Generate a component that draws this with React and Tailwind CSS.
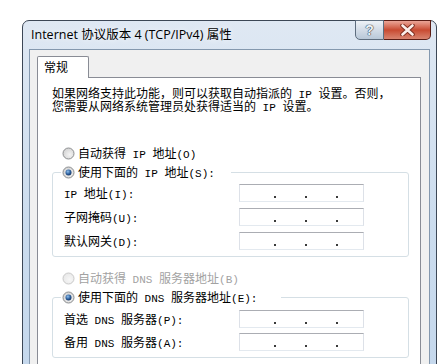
import React from 'react'

const L = ({ children }) => (
  <span className="font-['Liberation_Mono'] text-[11px] leading-[0px]">{children}</span>
)

const Radio = ({ checked, disabled }) => (
  <svg width="13" height="13" viewBox="0 0 13 13" className="shrink-0">
    <defs>
      <radialGradient id={disabled ? 'rgd' : 'rgn'} cx="0.6" cy="0.6" r="0.7">
        <stop offset="0" stopColor={disabled ? '#f7f7f7' : '#f4f4f4'} />
        <stop offset="1" stopColor={disabled ? '#e6e6e6' : '#cfcfcf'} />
      </radialGradient>
      <radialGradient id="rgdot" cx="0.4" cy="0.35" r="0.7">
        <stop offset="0" stopColor="#8fc0ee" />
        <stop offset="0.6" stopColor="#2a5c9a" />
        <stop offset="1" stopColor="#14305a" />
      </radialGradient>
    </defs>
    <circle
      cx="6.5"
      cy="6.5"
      r="5.5"
      fill={`url(#${disabled ? 'rgd' : 'rgn'})`}
      stroke={disabled ? '#c9c9c9' : '#8c8e90'}
    />
    {checked && <circle cx="6.5" cy="6.5" r="3" fill="url(#rgdot)" />}
  </svg>
)

const IpBox = () => (
  <div className="w-[125px] h-[18px] bg-white border border-[#dde1e8] border-t-[#abadb3] border-b-[#e3e9ef] flex items-start pt-[11px] pl-[34px] gap-[29px]">
    <span className="w-[2px] h-[2px] bg-[#3a3a3a]" />
    <span className="w-[2px] h-[2px] bg-[#3a3a3a]" />
    <span className="w-[2px] h-[2px] bg-[#3a3a3a]" />
  </div>
)

const Row = ({ label, className = '' }) => (
  <div className={`flex items-center h-[18px] pl-[11px] ${className}`}>
    <div className="w-[175px] leading-[12px]">{label}</div>
    <IpBox />
  </div>
)

export default function App() {
  return (
    <div className="w-[446px] h-[364px] bg-white overflow-hidden pt-[20px] pl-[22px]">
      <div className="w-[415px] h-[420px] border border-[#3c4756] rounded-t-[7px] bg-gradient-to-b from-[#dfe8f3] via-[#cbdcee] to-[#c2d6ec] flex flex-col">
        {/* title bar */}
        <div className="h-[28px] shrink-0 flex items-start justify-between pl-[8px] pr-[5px]">
          <div className="self-center font-['Open_Sans','Noto_Sans_CJK_SC',sans-serif] text-[12.5px] leading-[14px] text-black [text-shadow:0_0_6px_#ffffff]">
            Internet 协议版本 4 (TCP/IPv4) 属性
          </div>
          <div className="flex -mt-px">
            <div className="w-[29px] h-[20px] rounded-bl-[5px] border border-[#5e6d7e] bg-gradient-to-b from-[#eef2f7] via-[#d3dce7] to-[#b9c8d8] flex items-center justify-center font-['Liberation_Sans'] font-bold text-[14px] leading-none text-[#eef2f6] [text-shadow:0_0_1px_#34404f,0_0_1px_#34404f,0_0_1px_#34404f]">
              ?
            </div>
            <div className="w-[47px] h-[20px] rounded-br-[5px] border border-l-0 border-[#5a1c14] bg-gradient-to-b from-[#eaa597] via-[#c84a31] to-[#d88470] flex items-center justify-center">
              <svg width="15" height="12" viewBox="0 0 15 12">
                <path d="M2.5 1.5 L12.5 10.5 M12.5 1.5 L2.5 10.5" stroke="#7a2a1c" strokeWidth="4.4" strokeLinecap="round" />
                <path d="M2.5 1.5 L12.5 10.5 M12.5 1.5 L2.5 10.5" stroke="#fbeeea" strokeWidth="2.6" strokeLinecap="round" />
              </svg>
            </div>
          </div>
        </div>

        {/* client area */}
        <div className="mx-[6px] flex-1 border border-[#8498ae] bg-[#f0f0f0] pl-[7px] pr-[8px] pt-[6px] flex flex-col font-['Noto_Sans_CJK_SC',sans-serif] text-[12px] text-black">
          <div className="flex">
            <div className="relative z-10 w-[52px] h-[22px] -mb-px border border-b-0 border-[#898c95] rounded-t-[2px] bg-white pl-[6px] pt-[3px] leading-[14px]">
              常规
            </div>
          </div>
          <div className="flex-1 border border-[#898c95] bg-white pl-[14px] pt-[8px]">
            <p className="leading-[13px]">
              如果网络支持此功能，则可以获取自动指派的<L> IP </L>设置。否则，
            </p>
            <p className="leading-[13px]">
              您需要从网络系统管理员处获得适当的<L> IP </L>设置。
            </p>

            <div className="mt-[33px] h-[16px] pl-[10px] flex items-center gap-[3px] leading-[12px]">
              <Radio />
              <span>
                自动获得<L> IP </L>地址<L>(O)</L>
              </span>
            </div>

            <fieldset className="mt-[3px] w-[357px] border border-[#d5dfe5] rounded-[3px] pb-[6px]">
              <legend className="ml-[8px] pl-px pr-[16px] h-[16px] flex items-center gap-[3px] leading-[12px]">
                <Radio checked />
                <span>
                  使用下面的<L> IP </L>地址<L>(S):</L>
                </span>
              </legend>
              <Row className="mt-[4px]" label={<>
                <L>IP </L>地址<L>(I):</L>
              </>} />
              <Row className="mt-[6px]" label={<>
                子网掩码<L>(U):</L>
              </>} />
              <Row className="mt-[6px]" label={<>
                默认网关<L>(D):</L>
              </>} />
            </fieldset>

            <div className="mt-[13px] h-[16px] pl-[10px] flex items-center gap-[3px] leading-[12px] text-[#a2a2a2]">
              <Radio disabled />
              <span>
                自动获得<L> DNS </L>服务器地址<L>(B)</L>
              </span>
            </div>

            <fieldset className="mt-[3px] w-[357px] border border-[#d5dfe5] rounded-[3px] pb-[6px]">
              <legend className="ml-[8px] pl-px pr-[24px] h-[16px] flex items-center gap-[3px] leading-[12px]">
                <Radio checked />
                <span>
                  使用下面的<L> DNS </L>服务器地址<L>(E):</L>
                </span>
              </legend>
              <Row className="mt-[5px]" label={<>
                首选<L> DNS </L>服务器<L>(P):</L>
              </>} />
              <Row className="mt-[5px]" label={<>
                备用<L> DNS </L>服务器<L>(A):</L>
              </>} />
            </fieldset>
          </div>
        </div>
      </div>
    </div>
  )
}
